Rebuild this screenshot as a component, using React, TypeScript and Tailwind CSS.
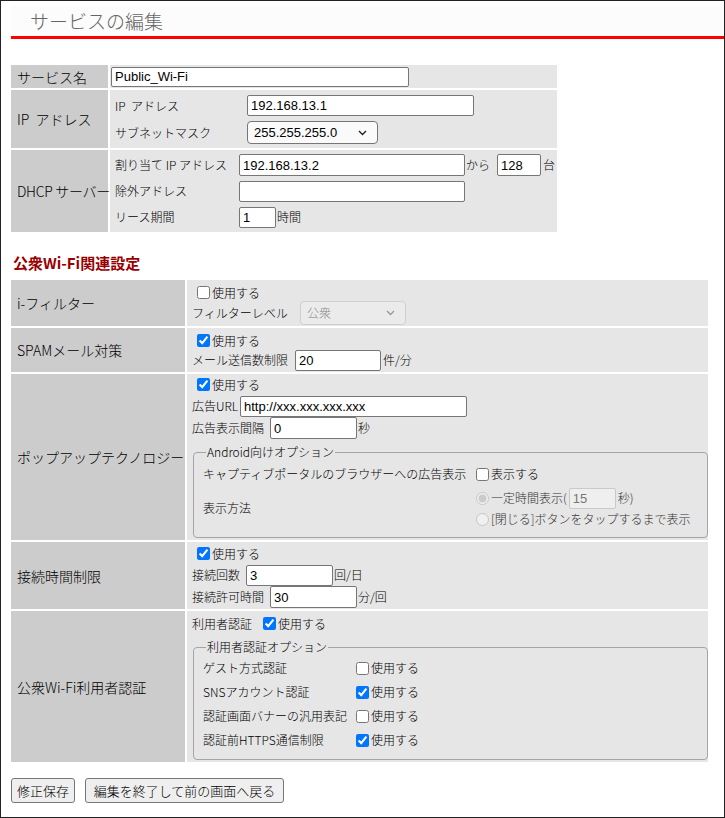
import React from 'react'

const boxFont = "font-['Liberation_Sans',Arial,sans-serif] text-[13px] font-normal"

function TextBox({ className, value, disabled }: { className: string; value: string; disabled?: boolean }) {
  return (
    <input
      type="text"
      defaultValue={value}
      disabled={disabled}
      className={`${className} ${boxFont} rounded-[2px] border px-[3px] outline-none ${
        disabled ? 'border-[#c9c9c9] bg-[#efefef] text-[#777]' : 'border-[#767676] bg-white text-black'
      }`}
    />
  )
}

function Select({ className, value, disabled }: { className: string; value: string; disabled?: boolean }) {
  return (
    <div className={`relative ${className}`}>
      <select
        defaultValue={value}
        disabled={disabled}
        className={`h-full w-full appearance-none rounded-[4px] border pl-[6px] outline-none ${
          disabled
            ? "border-[#cfcfcf] bg-[#ebebeb] text-[#8a8a8a] font-['Noto_Sans_CJK_JP',sans-serif] text-[12px]"
            : `border-[#767676] bg-[#fafafa] text-black ${boxFont}`
        }`}
      >
        <option>{value}</option>
      </select>
      <svg
        className="pointer-events-none absolute right-[11px] top-1/2 -translate-y-1/2"
        width="9"
        height="6"
        viewBox="0 0 9 6"
      >
        <path d="M1 1l3.5 3.5L8 1" fill="none" stroke={disabled ? '#9a9a9a' : '#222'} strokeWidth="1.4" />
      </svg>
    </div>
  )
}

function Check({ checked, label }: { checked?: boolean; label: string }) {
  return (
    <label className="flex items-center gap-[2px]">
      <input type="checkbox" defaultChecked={checked} className="m-0 h-[13px] w-[13px]" />
      <span>{label}</span>
    </label>
  )
}

const head = 'flex items-center whitespace-nowrap bg-[#cccccc] pl-[6px] text-[14px]'
const body = 'bg-[#e6e6e6] whitespace-nowrap'

const App = () => {
  return (
    <div className="h-[818px] w-[725px] overflow-hidden border border-[#222] bg-white font-['Noto_Sans_CJK_JP',sans-serif] text-[12px] font-light leading-[16px] text-black">
      <div className="ml-[10px] mt-[5px] flex h-[33px] items-center border-b-[3px] border-[#ff0000] bg-[#fcfcfc] pl-[19px] text-[19px] text-[#666]">
        サービスの編集
      </div>

      <div className="ml-[10px] mt-[26px] grid w-[546px] grid-cols-[97px_447px] gap-[2px]">
        <div className={`${head} h-[23px]`}>サービス名</div>
        <div className={`${body} flex items-center pl-[1px]`}>
          <TextBox className="h-[20px] w-[298px]" value="Public_Wi-Fi" />
        </div>

        <div className={head}>IP&nbsp; アドレス</div>
        <div className={`${body} flex h-[58px] flex-col gap-[5px] pl-[5px] pt-[5px]`}>
          <div className="flex h-[21px] items-center">
            <span className="w-[132px]">IP&nbsp; アドレス</span>
            <TextBox className="h-[21px] w-[227px]" value="192.168.13.1" />
          </div>
          <div className="flex h-[23px] items-center">
            <span className="w-[132px]">サブネットマスク</span>
            <Select className="h-[23px] w-[131px]" value="255.255.255.0" />
          </div>
        </div>

        <div className={`${head} tracking-[-0.3px]`}>DHCP サーバー</div>
        <div className={`${body} flex h-[82px] flex-col gap-[4px] pl-[5px] pt-[4px]`}>
          <div className="flex h-[22px] items-center">
            <span className="w-[124px]">割り当て IP アドレス</span>
            <TextBox className="h-[22px] w-[226px]" value="192.168.13.2" />
            <span className="ml-[1px]">から</span>
            <TextBox className="ml-[7px] h-[22px] w-[44px]" value="128" />
            <span className="ml-[2px]">台</span>
          </div>
          <div className="flex h-[22px] items-center">
            <span className="w-[124px]">除外アドレス</span>
            <TextBox className="h-[21px] w-[226px]" value="" />
          </div>
          <div className="flex h-[22px] items-center">
            <span className="w-[124px]">リース期間</span>
            <TextBox className="h-[21px] w-[37px]" value="1" />
            <span className="ml-[1px]">時間</span>
          </div>
        </div>
      </div>

      <div className="ml-[12px] mt-[22px] text-[15px] font-bold leading-[18px] text-[#990000]">公衆Wi-Fi関連設定</div>

      <div className="ml-[10px] mt-[8px] grid w-[697px] grid-cols-[174px_521px] gap-[2px]">
        <div className={head}>i-フィルター</div>
        <div className={`${body} flex h-[46px] flex-col pl-[5px] pt-[4px]`}>
          <div className="flex h-[17px] items-center pl-[5px]">
            <Check label="使用する" />
          </div>
          <div className="flex h-[24px] items-center">
            <span className="w-[108px]">フィルターレベル</span>
            <Select className="h-[24px] w-[106px]" value="公衆" disabled />
          </div>
        </div>

        <div className={head}>SPAMメール対策</div>
        <div className={`${body} flex h-[44px] flex-col pl-[5px] pt-[4px]`}>
          <div className="flex h-[17px] items-center pl-[5px]">
            <Check checked label="使用する" />
          </div>
          <div className="flex h-[22px] items-center">
            <span className="w-[103px]">メール送信数制限</span>
            <TextBox className="h-[21px] w-[86px]" value="20" />
            <span className="ml-[2px]">件/分</span>
          </div>
        </div>

        <div className={head}>ポップアップテクノロジー</div>
        <div className={`${body} flex h-[166px] flex-col pl-[5px] pt-[2px]`}>
          <div className="flex h-[17px] items-center pl-[5px]">
            <Check checked label="使用する" />
          </div>
          <div className="mt-[2px] flex h-[22px] items-center">
            <span className="w-[48px]">広告URL</span>
            <TextBox className="h-[21px] w-[227px]" value="http://xxx.xxx.xxx.xxx" />
          </div>
          <div className="flex h-[22px] items-center">
            <span className="w-[78px]">広告表示間隔</span>
            <TextBox className="h-[22px] w-[87px]" value="0" />
            <span className="ml-[1px]">秒</span>
          </div>
          <fieldset className="ml-[1px] mt-[6px] w-[515px] rounded-[4px] border border-[#a5a5a5] pb-[8px] pl-[9px]">
            <legend className="ml-[3px] px-[1px] leading-[14px]">Android向けオプション</legend>
            <div className="mt-[6px] grid grid-cols-[270px_1fr]">
              <div className="flex h-[18px] items-center">キャプティブポータルのブラウザーへの広告表示</div>
              <div className="flex h-[18px] items-center pl-[3px]">
                <Check label="表示する" />
              </div>
              <div className="mt-[4px] flex items-center">表示方法</div>
              <div className="mt-[4px] flex flex-col pl-[3px]">
                <label className="flex h-[22px] items-center gap-[2px] text-[#333]">
                  <input type="radio" name="disp" defaultChecked disabled className="m-0 h-[13px] w-[13px]" />
                  <span>一定時間表示(</span>
                  <TextBox className="h-[21px] w-[47px]" value="15" disabled />
                  <span>秒)</span>
                </label>
                <label className="flex h-[20px] items-center gap-[2px] text-[#333]">
                  <input type="radio" name="disp" disabled className="m-0 h-[13px] w-[13px]" />
                  <span>[閉じる]ボタンをタップするまで表示</span>
                </label>
              </div>
            </div>
          </fieldset>
        </div>

        <div className={head}>接続時間制限</div>
        <div className={`${body} flex h-[67px] flex-col pl-[5px] pt-[3px]`}>
          <div className="flex h-[17px] items-center pl-[5px]">
            <Check checked label="使用する" />
          </div>
          <div className="mt-[2px] flex h-[22px] items-center">
            <span className="w-[54px]">接続回数</span>
            <TextBox className="h-[21px] w-[87px]" value="3" />
            <span className="ml-[1px]">回/日</span>
          </div>
          <div className="flex h-[22px] items-center">
            <span className="w-[78px]">接続許可時間</span>
            <TextBox className="h-[22px] w-[87px]" value="30" />
            <span className="ml-[1px]">分/回</span>
          </div>
        </div>

        <div className={head}>公衆Wi-Fi利用者認証</div>
        <div className={`${body} flex h-[151px] flex-col pl-[5px] pt-[4px]`}>
          <div className="flex h-[17px] items-center">
            <span className="w-[71px]">利用者認証</span>
            <Check checked label="使用する" />
          </div>
          <fieldset className="ml-[1px] mt-[8px] h-[120px] w-[515px] rounded-[4px] border border-[#a5a5a5] pl-[9px]">
            <legend className="ml-[3px] px-[1px] leading-[14px]">利用者認証オプション</legend>
            <div className="mt-[2px] grid grid-cols-[153px_1fr]">
              {[
                ['ゲスト方式認証', false],
                ['SNSアカウント認証', true],
                ['認証画面バナーの汎用表記', false],
                ['認証前HTTPS通信制限', true],
              ].map(([name, on]) => (
                <React.Fragment key={name as string}>
                  <div className="flex h-[24px] items-center">{name as string}</div>
                  <div className="flex h-[24px] items-center">
                    <Check checked={on as boolean} label="使用する" />
                  </div>
                </React.Fragment>
              ))}
            </div>
          </fieldset>
        </div>
      </div>

      <div className="ml-[10px] mt-[16px] flex gap-[10px] text-[13px]">
        <button className="h-[25px] w-[64px] rounded-[3px] border border-[#767676] bg-[#efefef]">修正保存</button>
        <button className="h-[25px] w-[199px] rounded-[3px] border border-[#767676] bg-[#efefef]">
          編集を終了して前の画面へ戻る
        </button>
      </div>
    </div>
  )
}

export default App
